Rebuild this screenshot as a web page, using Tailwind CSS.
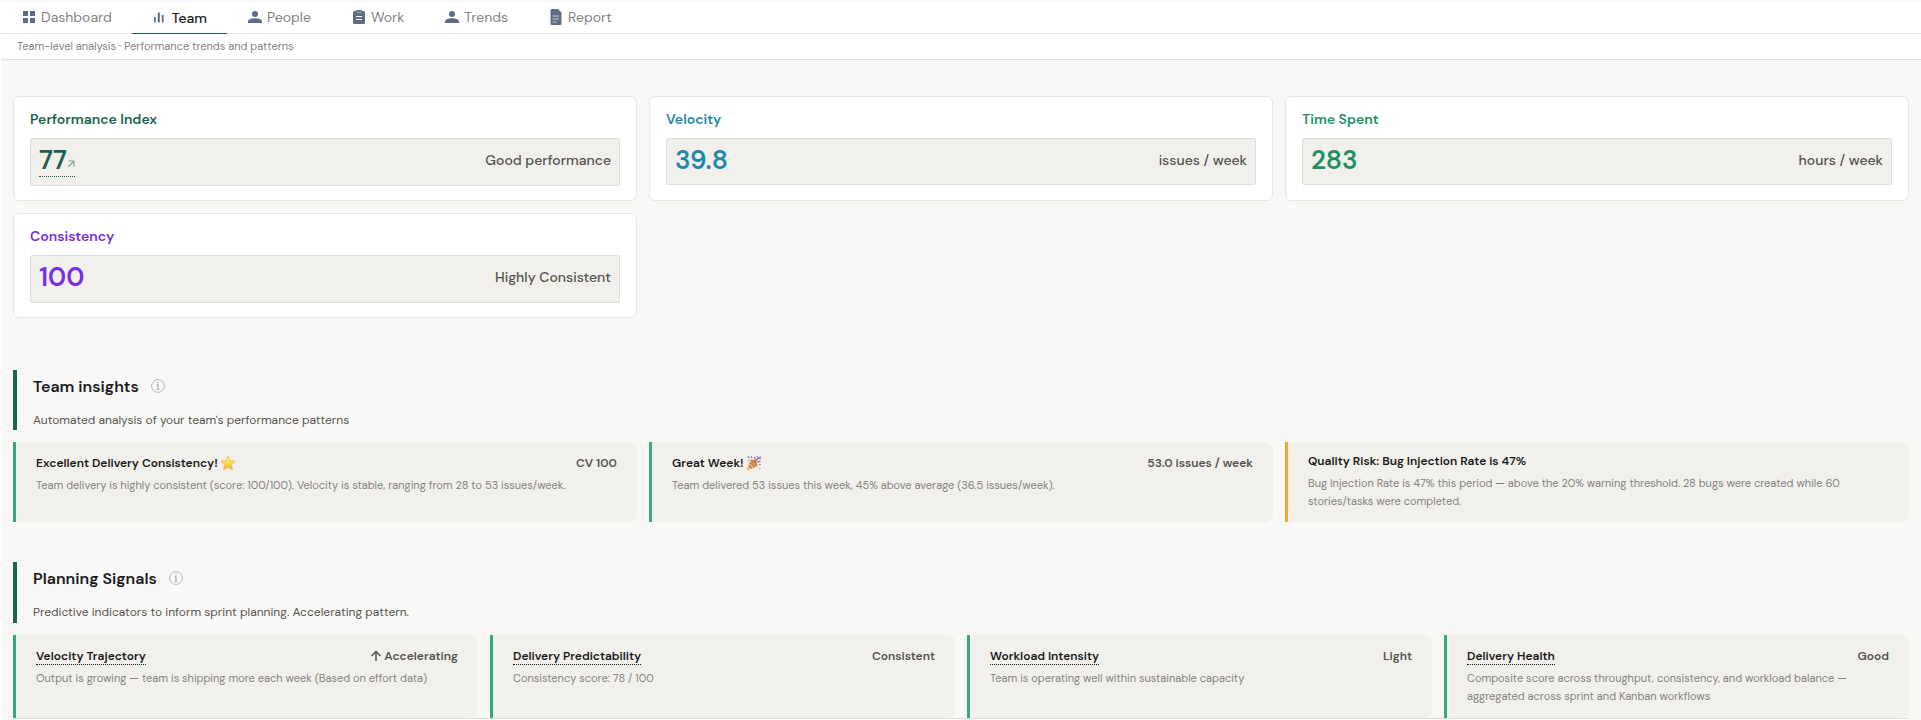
<!DOCTYPE html>
<html lang="en">
<head>
  <meta charset="UTF-8">
  <meta name="viewport" content="width=device-width, initial-scale=1.0">
  <title>Team | Performance</title>
  <script src="https://cdn.jsdelivr.net/npm/@tailwindcss/browser@4"></script>
</head>
<body class="bg-[#f9f8f6] font-['DM_Sans',Inter,sans-serif] text-[#1a1a1a] border-l border-white">
  <header class="bg-white">
    <nav class="border-t-2 border-b border-t-[#f8f8f7] border-b-[#e5e4e2] flex text-sm leading-5 text-[#85847f]">
      <a href="#dashboard" class="flex items-center gap-1 h-[31px] px-5 pb-0.5">
        <svg class="w-4 h-4 text-[#5f6c84]" viewBox="0 0 16 16" fill="currentColor">
          <path d="M2 2h5v5H2zM9 2h5v5H9zM2 9h5v5H2zM9 9h5v5H9z" />
        </svg>
        Dashboard
      </a>
      <a href="#team" aria-current="page" class="flex items-center gap-1 h-8 -mb-px px-5 border-b border-[#1b6350] font-medium text-[#1a1a1a]">
        <svg class="w-4 h-4 text-[#5f6c84]" viewBox="0 0 16 16" fill="currentColor">
          <path d="M2 7h1.700v5.500H2zM5.800 2.500h2v10h-2zM9.800 5h1.800v7.500H9.800z" />
        </svg>
        Team
      </a>
      <a href="#people" class="flex items-center gap-1 h-[31px] px-5 pb-0.5">
        <svg class="w-4 h-4 text-[#5f6c84]" viewBox="0 0 16 16" fill="currentColor">
          <circle cx="8" cy="5" r="3" />
          <path d="M1 14v-1.500C1 10.300 4.500 9.200 8 9.200s7 1.100 7 3.300V14z" />
        </svg>
        People
      </a>
      <a href="#work" class="flex items-center gap-1 h-[31px] px-5 pb-0.5">
        <svg class="w-4 h-4" viewBox="0 0 16 16">
          <rect x="2" y="2" width="12" height="13" rx="1.500" fill="#5f6c84" />
          <rect x="5" y="1" width="6" height="2.500" rx="1" fill="#5f6c84" />
          <path d="M5.500 3.200h5" stroke="#b9c0cc" stroke-width=".8" />
          <path d="M5 7.500h6M5 10.500h6" stroke="#fff" stroke-width="1" />
        </svg>
        Work
      </a>
      <a href="#trends" class="flex items-center gap-1 h-[31px] px-5 pb-0.5">
        <svg class="w-4 h-4 text-[#5f6c84]" viewBox="0 0 16 16" fill="currentColor">
          <circle cx="8" cy="5" r="3" />
          <path d="M1 14v-1.500C1 10.300 4.500 9.200 8 9.200s7 1.100 7 3.300V14z" />
        </svg>
        Trends
      </a>
      <a href="#report" class="flex items-center gap-1 h-[31px] px-5 pb-0.5">
        <svg class="w-4 h-4" viewBox="0 0 16 16">
          <path d="M4 0h6l3.500 3.500V14.500A1.500 1.500 0 0 1 12 16H4a1.500 1.500 0 0 1-1.500-1.500v-13A1.500 1.500 0 0 1 4 0z" fill="#5f6c84" />
          <path d="M4.500 7h6.500M4.500 10h6.500M4.500 13h4" stroke="#c3c9d3" stroke-width="1.200" />
        </svg>
        Report
      </a>
    </nav>
    <p class="border-b border-[#dfdedb] px-4 pt-[3px] pb-[3px] text-[11px] leading-[19px] text-[#85847f]">Team-level analysis · Performance trends and patterns</p>
  </header>

  <main class="px-3 pt-9">
    <!-- Metric cards -->
    <section class="grid grid-cols-3 gap-3">
      <div class="bg-white border border-[#e8e7e2] rounded-md px-4 pt-3 pb-3.5">
        <h2 class="text-sm leading-5 font-semibold text-[#1b6350]">Performance Index</h2>
        <div class="mt-[9px] h-12 flex items-center justify-between rounded-xs border border-[#dfdfda] bg-[#f1f0ec] px-2 pb-1">
          <a href="#index" class="flex items-end border-b border-dotted border-[#1b6350] text-[#1b6350]">
            <span class="text-[26px] leading-8 font-semibold">77</span>
            <svg class="w-2 h-2 mb-2" viewBox="0 0 8 8" fill="none" stroke="#7fa79a" stroke-width="1.200">
              <path d="M1 7l6-6M1.500 1H7v5.500" />
            </svg>
          </a>
          <span class="text-sm leading-5 font-medium text-[#555450]">Good performance</span>
        </div>
      </div>
      <div class="bg-white border border-[#e8e7e2] rounded-md px-4 pt-3 pb-3.5">
        <h2 class="text-sm leading-5 font-semibold text-[#1c88ab]">Velocity</h2>
        <div class="mt-[9px] h-[47px] flex items-center justify-between rounded-xs border border-[#dfdfda] bg-[#f1f0ec] px-2 pb-1">
          <span class="text-[26px] leading-8 font-semibold text-[#1c88ab]">39.8</span>
          <span class="text-sm leading-5 font-medium text-[#555450]">issues / week</span>
        </div>
      </div>
      <div class="bg-white border border-[#e8e7e2] rounded-md px-4 pt-3 pb-3.5">
        <h2 class="text-sm leading-5 font-semibold text-[#1d9065]">Time Spent</h2>
        <div class="mt-[9px] h-[47px] flex items-center justify-between rounded-xs border border-[#dfdfda] bg-[#f1f0ec] px-2 pb-1">
          <span class="text-[26px] leading-8 font-semibold text-[#1d9065]">283</span>
          <span class="text-sm leading-5 font-medium text-[#555450]">hours / week</span>
        </div>
      </div>
      <div class="bg-white border border-[#e8e7e2] rounded-md px-4 pt-3 pb-3.5">
        <h2 class="text-sm leading-5 font-semibold text-[#772fe6]">Consistency</h2>
        <div class="mt-[9px] h-12 flex items-center justify-between rounded-xs border border-[#dfdfda] bg-[#f1f0ec] px-2 pb-1">
          <span class="text-[26px] leading-8 font-semibold text-[#772fe6]">100</span>
          <span class="text-sm leading-5 font-medium text-[#555450]">Highly Consistent</span>
        </div>
      </div>
    </section>

    <!-- Team insights -->
    <section class="mt-[52px]">
      <div class="border-l-4 border-[#1b6350] pl-4">
        <div class="flex items-center gap-3">
          <h2 class="text-base leading-[34px] font-semibold">Team insights</h2>
          <button type="button" aria-label="About team insights" class="pb-0.5">
            <svg class="w-3.5 h-3.5" viewBox="0 0 14 14" fill="none" stroke="#a5afbe">
              <circle cx="7" cy="7" r="6.400" stroke-width=".9" />
              <path d="M7 2.800v1.500M5.800 5.700H7V10.500M5.800 10.500h2.400" stroke-width="1.200" />
            </svg>
          </button>
        </div>
        <p class="mt-1.5 text-xs leading-5 text-[#555450]">Automated analysis of your team's performance patterns</p>
      </div>
      <div class="mt-3 grid grid-cols-3 gap-3">
        <article class="min-h-20 rounded-r-lg border-l-3 border-[#34ab78] bg-[#f1f0ec] px-5 pt-2.5 pb-2">
          <div class="flex items-center justify-between text-xs leading-[22px] font-semibold">
            <h3 class="flex items-center gap-0.5">
              Excellent Delivery Consistency!
              <svg class="w-4 h-4" viewBox="0 0 16 16">
                <defs>
                  <linearGradient id="gold" x1="0" y1="0" x2="0" y2="1">
                    <stop offset="0" stop-color="#fff0a0" />
                    <stop offset=".6" stop-color="#fcd34a" />
                    <stop offset="1" stop-color="#f2a51f" />
                  </linearGradient>
                </defs>
                <path d="M8 .8l2 4.900 5.300.4-4 3.500 1.200 5.200L8 12l-4.500 2.800 1.200-5.200-4-3.500 5.300-.4z" fill="url(#gold)" stroke="#f3b840" stroke-width=".7" stroke-linejoin="round" />
              </svg>
            </h3>
            <span class="text-[#555450]">CV 100</span>
          </div>
          <p class="mt-0.5 text-[11px] leading-[18px] text-[#85847f]">Team delivery is highly consistent (score: 100/100). Velocity is stable, ranging from 28 to 53 issues/week.</p>
        </article>
        <article class="min-h-20 rounded-r-lg border-l-3 border-[#34ab78] bg-[#f1f0ec] px-5 pt-2.5 pb-2">
          <div class="flex items-center justify-between text-xs leading-[22px] font-semibold">
            <h3 class="flex items-center gap-0.5">
              Great Week!
              <svg class="w-4 h-4" viewBox="0 0 16 16" fill="none">
                <path d="M5 4.500L1 15l10.500-4z" fill="#f5bd3c" stroke="#e0a33a" stroke-width=".5" />
                <path d="M4 7.500l4.500 4.500M2.800 10.500l3 2.800" stroke="#a26fc4" stroke-width="1.200" />
                <ellipse cx="8.200" cy="7.800" rx="1.600" ry="4.300" transform="rotate(-45 8.200 7.800)" fill="#d0892f" />
                <path d="M8 7c1.500-1.500.5-3 1-5M9.500 8c1-1.500 3-.5 5-2" stroke="#d6527c" stroke-width="1.100" />
                <path d="M9 6.500L13.500 2" stroke="#8d52b8" stroke-width="1.100" />
                <path d="M1.500 1.500l2 1.500M5 1l1 2M13 9.500l2 .5M12.500 4l2.500-.5" stroke="#5c8fd9" stroke-width="1.200" />
                <path d="M11 1l.8 1.200M14 1.500l1 .8M2 5.500l1.200.5M13.500 13l.8 1" stroke="#e3688b" stroke-width="1.200" />
              </svg>
            </h3>
            <span class="text-[#555450]">53.0 issues / week</span>
          </div>
          <p class="mt-0.5 text-[11px] leading-[18px] text-[#85847f]">Team delivered 53 issues this week, 45% above average (36.5 issues/week).</p>
        </article>
        <article class="min-h-20 rounded-r-lg border-l-3 border-[#f5a52b] bg-[#f1f0ec] px-5 pt-2.5 pb-2">
          <h3 class="text-xs leading-[18px] font-semibold">Quality Risk: Bug Injection Rate is 47%</h3>
          <p class="mt-1 max-w-[560px] text-[11px] leading-[18px] text-[#85847f]">Bug Injection Rate is 47% this period — above the 20% warning threshold. 28 bugs were created while 60 stories/tasks were completed.</p>
        </article>
      </div>
    </section>

    <!-- Planning signals -->
    <section class="mt-10">
      <div class="border-l-4 border-[#1b6350] pl-4 pb-px">
        <div class="flex items-center gap-3">
          <h2 class="text-base leading-[34px] font-semibold">Planning Signals</h2>
          <button type="button" aria-label="About planning signals" class="pb-0.5">
            <svg class="w-3.5 h-3.5" viewBox="0 0 14 14" fill="none" stroke="#a5afbe">
              <circle cx="7" cy="7" r="6.400" stroke-width=".9" />
              <path d="M7 2.800v1.500M5.800 5.700H7V10.500M5.800 10.500h2.400" stroke-width="1.200" />
            </svg>
          </button>
        </div>
        <p class="mt-1.5 text-xs leading-5 text-[#555450]">Predictive indicators to inform sprint planning. Accelerating pattern.</p>
      </div>
      <div class="mt-3 grid grid-cols-4 gap-3">
        <article class="min-h-[83px] rounded-r-lg border-l-3 border-[#34ab78] bg-[#f1f0ec] px-5 pt-3 pb-2">
          <div class="flex items-center justify-between text-xs font-semibold">
            <h3 class="mt-px leading-4 border-b border-dotted border-[#1a1a1a]">Velocity Trajectory</h3>
            <span class="flex items-center gap-0.5 leading-4 text-[#555450]">
              <svg class="w-3 h-3" viewBox="0 0 12 12" fill="none" stroke="currentColor" stroke-width="1.500">
                <path d="M6 11V1.500M1.500 6L6 1.500 10.500 6" />
              </svg>
              Accelerating
            </span>
          </div>
          <p class="mt-1 text-[11px] leading-[18px] text-[#85847f]">Output is growing — team is shipping more each week (Based on effort data)</p>
        </article>
        <article class="min-h-[83px] rounded-r-lg border-l-3 border-[#34ab78] bg-[#f1f0ec] px-5 pt-3 pb-2">
          <div class="flex items-center justify-between text-xs font-semibold">
            <h3 class="mt-px leading-4 border-b border-dotted border-[#1a1a1a]">Delivery Predictability</h3>
            <span class="leading-4 text-[#555450]">Consistent</span>
          </div>
          <p class="mt-1 text-[11px] leading-[18px] text-[#85847f]">Consistency score: 78 / 100</p>
        </article>
        <article class="min-h-[83px] rounded-r-lg border-l-3 border-[#34ab78] bg-[#f1f0ec] px-5 pt-3 pb-2">
          <div class="flex items-center justify-between text-xs font-semibold">
            <h3 class="mt-px leading-4 border-b border-dotted border-[#1a1a1a]">Workload Intensity</h3>
            <span class="leading-4 text-[#555450]">Light</span>
          </div>
          <p class="mt-1 text-[11px] leading-[18px] text-[#85847f]">Team is operating well within sustainable capacity</p>
        </article>
        <article class="min-h-[83px] rounded-r-lg border-l-3 border-[#34ab78] bg-[#f1f0ec] px-5 pt-3 pb-2">
          <div class="flex items-center justify-between text-xs font-semibold">
            <h3 class="mt-px leading-4 border-b border-dotted border-[#1a1a1a]">Delivery Health</h3>
            <span class="leading-4 text-[#555450]">Good</span>
          </div>
          <p class="mt-1 max-w-[400px] text-[11px] leading-[18px] text-[#85847f]">Composite score across throughput, consistency, and workload balance — aggregated across sprint and Kanban workflows</p>
        </article>
      </div>
    </section>

    <div class="h-0.5 rounded-t-lg border-t border-[#dfdedb] bg-white"></div>
  </main>
</body>
</html>
